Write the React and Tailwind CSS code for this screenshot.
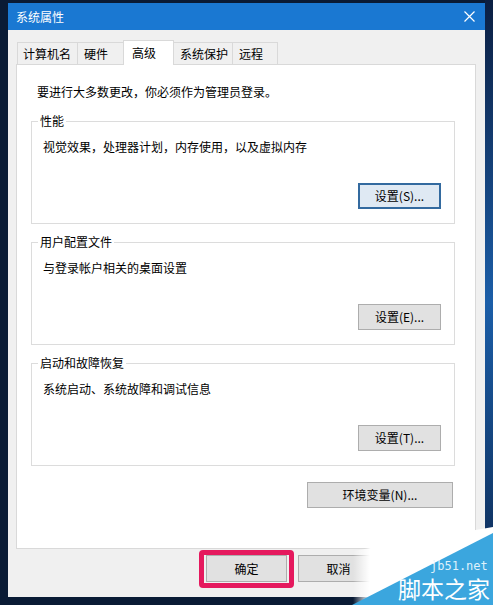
import React from "react";

const font = "font-['Noto_Sans_CJK_SC','Microsoft_YaHei',sans-serif]";

function Btn({ children, className = "" }) {
  return (
    <button
      className={`flex items-center justify-center border border-[#adadad] bg-[#e1e1e1] text-[12px] leading-[16px] text-black ${className}`}
    >
      {children}
    </button>
  );
}

function Group({ title, text, button, focused }) {
  return (
    <fieldset className="m-0 min-w-0 border border-[#dcdcdc] p-0">
      <legend className="ml-[6px] px-[2px] text-[12px] leading-[16px] text-black">
        {title}
      </legend>
      <div className="mt-[10px] pl-[11px] text-[12px] leading-[16px] text-black">
        {text}
      </div>
      <div className="mt-[28px] mb-[14px] flex justify-end pr-[13px]">
        {focused ? (
          <Btn className="h-[26px] w-[83px] !border-2 !border-[#336a9f] !bg-[#dfe9f3]">
            {button}
          </Btn>
        ) : (
          <Btn className="h-[26px] w-[83px]">{button}</Btn>
        )}
      </div>
    </fieldset>
  );
}

const tabs = [
  { label: "计算机名", w: "w-[60px] pl-[5px]" },
  { label: "硬件", w: "w-[46px] pl-[6px]" },
  { label: "高级", w: "w-[51px] pl-[8px]", active: true },
  { label: "系统保护", w: "w-[58px] pl-[6px]" },
  { label: "远程", w: "w-[46px] pl-[6px]", last: true },
];

export default function App() {
  return (
    <div className={`relative flex h-[605px] w-[493px] overflow-hidden bg-[#0a1b35] ${font}`}>
      <div className="w-[8px] shrink-0" />

      {/* dialog window */}
      <div className="mt-[3px] flex h-[594px] w-[477px] shrink-0 flex-col bg-[#f0f0f0]">
        {/* title bar */}
        <div className="flex h-[27px] items-center justify-between bg-[#1a78d2] pl-[8px] pr-[10px]">
          <span className="text-[12px] leading-[16px] text-white">系统属性</span>
          <svg width="11" height="11" viewBox="0 0 11 11">
            <path d="M0.5 0.5L10.5 10.5M10.5 0.5L0.5 10.5" stroke="#fff" strokeWidth="1.2" />
          </svg>
        </div>

        <div className="flex flex-1 flex-col pl-[8px] pr-[9px] pt-[10px]">
          {/* tabs */}
          <div className="flex h-[24px] items-end pl-[1px]">
            {tabs.map((t, i) => (
              <div
                key={t.label}
                className={`flex items-center border-[#d9d9d9] text-[12px] leading-[16px] text-black ${t.w} ${
                  t.active
                    ? "relative z-10 -mb-px h-[25px] border-l border-r border-t bg-white"
                    : "h-[22px] border-t bg-[#f0f0f0] " +
                      (tabs[i - 1]?.active ? "" : "border-l ") +
                      (t.last ? "border-r" : "")
                }`}
              >
                {t.label}
              </div>
            ))}
          </div>

          {/* tab panel */}
          <div className="flex h-[485px] flex-col border border-[#d9d9d9] bg-white pl-[14px] pr-[20px] pt-[19px]">
            <div className="ml-[6px] text-[12px] leading-[16px] text-black">
              要进行大多数更改，你必须作为管理员登录。
            </div>
            <div className="mt-[13px]">
              <Group
                title="性能"
                text="视觉效果，处理器计划，内存使用，以及虚拟内存"
                button="设置(S)..."
                focused
              />
            </div>
            <div className="mt-[10px]">
              <Group title="用户配置文件" text="与登录帐户相关的桌面设置" button="设置(E)..." />
            </div>
            <div className="mt-[10px]">
              <Group title="启动和故障恢复" text="系统启动、系统故障和调试信息" button="设置(T)..." />
            </div>
            <div className="mt-[16px] flex justify-end pr-[2px]">
              <Btn className="h-[26px] w-[146px]">环境变量(N)...</Btn>
            </div>
          </div>

          {/* dialog buttons */}
          <div className="mt-[6px] flex justify-end gap-[11px] pr-[97px]">
            <div className="relative">
              <Btn className="h-[27px] w-[81px]">确定</Btn>
              <span className="pointer-events-none absolute -bottom-[6px] -left-[7px] -right-[7px] -top-[5px] rounded-[4px] border-[5px] border-[#e5195e]" />
            </div>
            <Btn className="h-[27px] w-[81px]">取消</Btn>
          </div>
        </div>
      </div>

      <div className="flex-1 self-stretch bg-gradient-to-b from-[#0b1f42] via-[#1b5ea8] to-[#0c2850]" />

      {/* watermark */}
      <svg
        className="pointer-events-none absolute bottom-0 right-0"
        width="160"
        height="90"
        viewBox="0 0 160 90"
      >
        <defs>
          <linearGradient id="fade" x1="0" y1="0" x2="1" y2="0">
            <stop offset="0" stopColor="#ffffff" stopOpacity="0" />
            <stop offset="0.12" stopColor="#ffffff" stopOpacity="1" />
            <stop offset="1" stopColor="#ffffff" stopOpacity="1" />
          </linearGradient>
        </defs>
        <polygon points="20,90 20,36 160,12 160,90" fill="url(#fade)" />
        <polygon points="19,90 160,18 160,90" fill="#3ba6de" />
        <text
          x="97"
          y="55"
          fill="#dff1fb"
          fontSize="12"
          fontFamily="'DejaVu Sans Mono', monospace"
        >
          jb51.net
        </text>
        <text
          x="65"
          y="83"
          fill="#ffffff"
          fontSize="23"
          fontFamily="'Noto Sans CJK SC', sans-serif"
        >
          脚本之家
        </text>
      </svg>
    </div>
  );
}
